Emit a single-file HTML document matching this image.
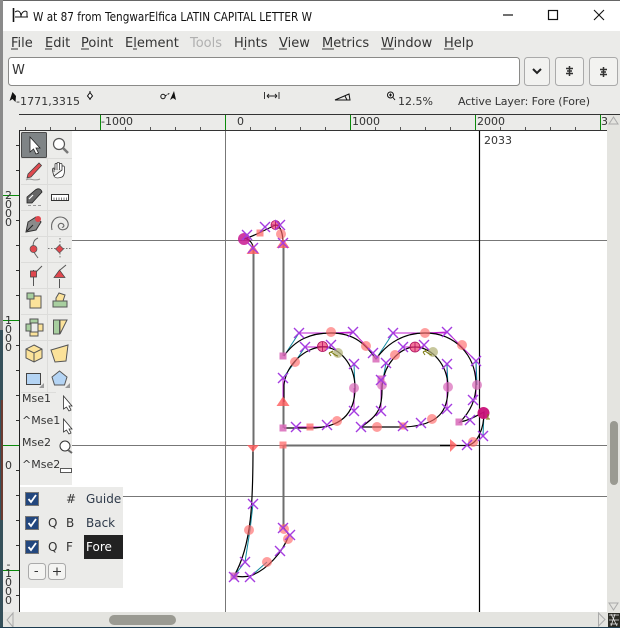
<!DOCTYPE html>
<html><head><meta charset="utf-8"><style>
html,body{margin:0;padding:0;width:620px;height:628px;overflow:hidden;background:#fff}
svg{display:block}
text{font-family:"DejaVu Sans","Liberation Sans",sans-serif;fill:#333}
</style></head><body>
<svg width="620" height="628" viewBox="0 0 620 628" xmlns="http://www.w3.org/2000/svg">
<defs>
<g id="x"><path d="M-5 -5L5 5M5 -5L-5 5" stroke="#a53be0" stroke-width="1.400" fill="none"/></g>
<circle id="c" r="5" fill="#ff6a6a" fill-opacity=".65"/>
<circle id="p" r="5" fill="#d868b8" fill-opacity=".7"/>
<circle id="o" r="5" fill="#b4b47c" fill-opacity=".75"/>
<rect id="s" x="-3.500" y="-3.500" width="7" height="7" fill="#ff6a6a" fill-opacity=".75"/>
<rect id="q" x="-3.500" y="-3.500" width="7" height="7" fill="#d868b8" fill-opacity=".85"/>
<path id="t" d="M0 -5.500L6.500 4H-6.500Z" fill="#ff5a5a" fill-opacity=".8"/>
</defs>

<rect width="620" height="628" fill="#fff"/>
<!-- title -->
<rect x="0" y="0" width="620" height="1" fill="#666"/>
<rect x="3" y="31" width="617" height="83" fill="#ebebe9"/>
<path d="M15 12C18 10 21 11 21 17M21 17C21 12 25 10 27 12V17M15 17H28" stroke="#111" fill="none" stroke-width="1"/>
<path d="M13.500 8V22" stroke="#111" stroke-width="1.600"/>
<text x="33" y="21" font-size="12" textLength="279" lengthAdjust="spacingAndGlyphs" style="fill:#111">W at 87 from TengwarElfica LATIN CAPITAL LETTER W</text>
<path d="M503 15H513" stroke="#111" stroke-width="1.200"/>
<rect x="548.500" y="10.500" width="9" height="9" fill="none" stroke="#111" stroke-width="1.200"/>
<path d="M594 10L604 20M604 10L594 20" stroke="#111" stroke-width="1.100"/>
<!-- menu -->
<g font-size="13">
<text x="11" y="47">File</text><path d="M11 49H18" stroke="#333"/>
<text x="45" y="47">Edit</text><path d="M45 49H52" stroke="#333"/>
<text x="81" y="47">Point</text><path d="M81 49H89" stroke="#333"/>
<text x="125" y="47">Element</text><path d="M133 49H137" stroke="#333"/>
<text x="190" y="47" style="fill:#b0b0b0">Tools</text>
<text x="234" y="47">Hints</text><path d="M243 49H246" stroke="#333"/>
<text x="279" y="47">View</text><path d="M279 49H287" stroke="#333"/>
<text x="322" y="47">Metrics</text><path d="M322 49H334" stroke="#333"/>
<text x="381" y="47">Window</text><path d="M381 49H394" stroke="#333"/>
<text x="444" y="47">Help</text><path d="M444 49H454" stroke="#333"/>
</g>
<!-- input -->
<rect x="8.500" y="57.500" width="511" height="28" rx="3" fill="#fff" stroke="#8a8a88"/>
<text x="12" y="74" font-size="13">W</text>
<g fill="#f2f2f0" stroke="#aaa">
<rect x="524.500" y="57.500" width="25" height="28" rx="3"/>
<rect x="555.500" y="57.500" width="28" height="28" rx="3"/>
<rect x="589.500" y="57.500" width="28" height="28" rx="3"/>
</g>
<path d="M533 69L537 73L541 69" stroke="#222" stroke-width="2" fill="none"/>
<path d="M569.500 66V76M566 68.500H573M567 71H572M566 73.500H573" stroke="#333" stroke-width="1.500" fill="none"/>
<path d="M603.500 67V77M600 69.500H607M601 72H606M600 74.500H607" stroke="#333" stroke-width="1.500" fill="none"/>
<!-- status -->
<path d="M12.500 92L9.500 101L12.500 99L15.500 102L16 96Z" fill="#111"/>
<text x="16" y="105" font-size="11" textLength="64">-1771,3315</text>
<path d="M90 91V100" stroke="#111"/><path d="M90 92.500L92.500 96L90 99L87.500 96Z" fill="#fff" stroke="#111"/>
<circle cx="163" cy="96.500" r="2.200" fill="none" stroke="#111"/><path d="M165 96L170 93" stroke="#111" stroke-dasharray="2 1"/>
<path d="M174 91L170 100L173 98L176 100Z" fill="#111"/>
<path d="M264.500 92V99M279 92V99M267 96H277M267 96L269 94M267 96L269 98M277 96L275 94M277 96L275 98" stroke="#222" fill="none" stroke-width=".9"/>
<path d="M335 100H350L349 94Z" fill="none" stroke="#111"/><path d="M345 96L347 100" stroke="#111"/>
<circle cx="390.500" cy="95" r="3" fill="none" stroke="#111"/><path d="M393 97.500L395 100M389 95H392M390.500 93.500V96.500" stroke="#111"/>
<text x="398" y="105" font-size="11">12.5%</text>
<text x="458" y="105" font-size="11" textLength="132">Active Layer: Fore (Fore)</text>

<!-- top ruler -->
<rect x="3" y="114" width="604" height="16" fill="#ebebe9"/>
<rect x="3" y="114" width="617" height="1" fill="#333"/>
<rect x="20" y="130" width="587" height="1" fill="#333"/>
<g stroke="#555">
<path d="M25.500 127V130M50.500 127V130M75.500 127V130M125.500 127V130M150.500 127V130M175.500 127V130M200.500 127V130M250.500 127V130M275.500 127V130M300.500 127V130M325.500 127V130M375.500 127V130M400.500 127V130M425.500 127V130M450.500 127V130M500.500 127V130M525.500 127V130M550.500 127V130M575.500 127V130"/>
</g>
<path d="M100.500 115V130M225.500 115V130M350.500 115V130M475.500 115V130M600.500 115V130" stroke="#0a8a0a"/>
<g font-size="11">
<text x="101" y="125">-1000</text><text x="237" y="125">0</text><text x="352" y="125">1000</text><text x="477" y="125">2000</text><text x="601" y="125">3</text>
</g>

<!-- left edge & ruler -->
<rect x="0" y="0" width="3" height="330" fill="#8a8a8a"/>
<rect x="0" y="330" width="3" height="298" fill="#35505a"/>
<rect x="1" y="400" width="2" height="120" fill="#6a3a30"/>
<rect x="3" y="114" width="16" height="498" fill="#ebebe9"/>
<rect x="19" y="130" width="1" height="482" fill="#222"/>
<path d="M16 145.500H19M16 170.500H19M16 220.500H19M16 245.500H19M16 270.500H19M16 295.500H19M16 345.500H19M16 370.500H19M16 395.500H19M16 420.500H19M16 470.500H19M16 495.500H19M16 520.500H19M16 545.500H19M16 595.500H19" stroke="#333"/>
<path d="M3 195.500H19M3 320.500H19M3 445.500H19M3 570.500H19" stroke="#0a8a0a"/>
<g font-size="11" text-anchor="middle">
<text x="8.500" y="199">2</text><text x="8.500" y="208">0</text><text x="8.500" y="217">0</text><text x="8.500" y="226">0</text>
<text x="8.500" y="324">1</text><text x="8.500" y="333">0</text><text x="8.500" y="342">0</text><text x="8.500" y="351">0</text>
<text x="8.500" y="469">0</text>
<text x="8.500" y="568">-</text><text x="8.500" y="577">1</text><text x="8.500" y="586">0</text><text x="8.500" y="595">0</text><text x="8.500" y="604">0</text>
</g>

<!-- guides -->
<path d="M225.500 131V612" stroke="#777"/>
<path d="M72 240.500H607M72 445.500H607M123 496.500H607" stroke="#777"/>
<path d="M479.500 131V612" stroke="#000" stroke-width="1.200"/>
<text x="484" y="144" font-size="11">2033</text>

<!-- glyph: gray stems -->
<g stroke="#6e6e6e" stroke-width="2" fill="none">
<path d="M253.500 248V447M283.500 243V356M283.500 402V428M283.500 445V528M283.500 445.500H452"/>
</g>
<!-- control lines -->
<g stroke="#c020d0" stroke-width="1" fill="none">
<path d="M283 378V402M299 333H353M305 347H331M354 388V411M381 380V411M393 333H447M403 347H424M447 364V409M476 361V400M361 427L381 411M299 333L320 333"/>
<path d="M331 333L353 332L373 353M425 333L447 332L476 361M296 427H327"/>
</g>
<g stroke="#108aa0" stroke-width="1" fill="none">
<path d="M284 356L299 333M283 378L295 362M305 347L295 362M376 359L393 333M354 364L355 388M386 363L382 385M447 364L448 387M476 361L477 385M484 413L483 436M253 504L250 530L245 562L234 576M250 577L267 562"/>
</g>
<!-- splines -->
<g stroke="#000" stroke-width="1.200" fill="none">
<path d="M244 239C255 236 268 228 276 225C281 226 283 235 283 243"/>
<path d="M244 238C249 239 253 243 253 248"/>
<path d="M253 447C253 500 252 545 234 576C240 577 245 577 250 576C267 570 283 552 289 535L284 528"/>
<path d="M440 445.500H467C478 444 484 428 484 412C476 416 470 420 460 422C470 412 476 400 476 385C476 355 455 333 425 333C405 333 388 342 376 359C366 345 355 333 331 333C310 333 295 340 284 356"/>
<path d="M284 428L310 428C345 428 355 410 355 388C355 365 340 347 323 347C305 347 286 365 284 385V402"/>
<path d="M361 427L405 427C440 425 448 410 448 388C448 365 432 347 415 347C400 347 382 365 382 390C382 405 380 415 361 427Z"/>
</g>
<!-- points -->
<use href="#c" x="281" y="234"/><use href="#s" x="260" y="233"/><use href="#t" x="283" y="244"/><use href="#t" x="253" y="250"/>
<use href="#c" x="331" y="332"/><use href="#c" x="366" y="346"/><use href="#c" x="295" y="362"/>
<use href="#p" x="354" y="388"/><use href="#c" x="337" y="421"/><use href="#s" x="310" y="427"/><use href="#q" x="283" y="428"/><use href="#q" x="283" y="356"/><use href="#t" x="283" y="402"/>
<use href="#o" x="338" y="353"/><use href="#o" x="433" y="352"/>
<use href="#c" x="425" y="333"/><use href="#c" x="462" y="345"/><use href="#c" x="395" y="355"/>
<use href="#p" x="448" y="387"/><use href="#p" x="477" y="385"/><use href="#p" x="382" y="385"/><use href="#q" x="381" y="379"/><use href="#q" x="376" y="359"/>
<use href="#c" x="432" y="419"/><use href="#c" x="377" y="427"/><use href="#s" x="403" y="426"/><use href="#q" x="459" y="422"/><use href="#c" x="473" y="442"/>
<path d="M450 439L457 445L450 452Z" fill="#ff5a5a" fill-opacity=".8"/>
<path d="M247 445H259L253 452Z" fill="#ff5a5a" fill-opacity=".8"/>
<use href="#s" x="283" y="445"/><use href="#c" x="249" y="530"/><use href="#q" x="234" y="576"/><use href="#c" x="267" y="562"/><use href="#c" x="288" y="539"/><use href="#c" x="284" y="529"/>
<!-- start/special points -->
<circle cx="244" cy="239" r="6" fill="#c81890" fill-opacity=".85"/>
<circle cx="483.500" cy="413" r="6" fill="#c81078" fill-opacity=".95"/>
<g fill="#f04878" fill-opacity=".75" stroke="#b01060" stroke-width=".8"><circle cx="275.500" cy="225" r="4.500"/><circle cx="322.500" cy="346.500" r="5"/><circle cx="415" cy="347" r="5"/></g>
<path d="M271 225H280M275.500 220.500V229.500M317.500 346.500H327.500M322.500 341.500V351.500M410 347H420M415 342V352" stroke="#b01060" stroke-width=".8"/>
<path d="M329 353L333 351M329 353L331 356M331 352C334 354 336 356 338 356M423 352L427 350M423 352L425 355M425 351C428 353 430 355 432 355M488 414V419M486 419H490" stroke="#7a7a10" fill="none"/>
<!-- X points -->
<g>
<use href="#x" x="247" y="235"/><use href="#x" x="265" y="227"/><use href="#x" x="280" y="225"/><use href="#x" x="283" y="243"/><use href="#x" x="253" y="248"/>
<use href="#x" x="299" y="333"/><use href="#x" x="353" y="332"/><use href="#x" x="305" y="347"/><use href="#x" x="331" y="345"/><use href="#x" x="354" y="364"/><use href="#x" x="283" y="378"/><use href="#x" x="354" y="411"/><use href="#x" x="327" y="425"/><use href="#x" x="296" y="427"/><use href="#x" x="361" y="427"/>
<use href="#x" x="373" y="353"/><use href="#x" x="393" y="333"/><use href="#x" x="447" y="332"/><use href="#x" x="403" y="347"/><use href="#x" x="424" y="345"/><use href="#x" x="386" y="363"/><use href="#x" x="447" y="364"/><use href="#x" x="476" y="361"/><use href="#x" x="381" y="380"/><use href="#x" x="381" y="411"/><use href="#x" x="447" y="409"/><use href="#x" x="403" y="426"/><use href="#x" x="421" y="423"/><use href="#x" x="473" y="400"/><use href="#x" x="470" y="420"/><use href="#x" x="483" y="436"/><use href="#x" x="467" y="445"/>
<use href="#x" x="253" y="504"/><use href="#x" x="245" y="562"/><use href="#x" x="234" y="577"/><use href="#x" x="250" y="577"/><use href="#x" x="280" y="551"/><use href="#x" x="290" y="535"/><use href="#x" x="283" y="528"/>
</g>

<!-- toolbox -->
<rect x="20" y="131" width="52" height="354" fill="#ececea"/>
<path d="M21 184.500H72M21 210.500H72M21 236.500H72M21 262.500H72M21 288.500H72M21 314.500H72M21 340.500H72M21 392.500H56M47.500 158V392M47 158.500H72" stroke="#dcdcda"/>
<rect x="21.500" y="132.500" width="25" height="25" rx="1" fill="#7f8486" stroke="#4a4a4a"/>
<path d="M21 158.500H47" stroke="#dcdcda"/>
<path d="M30 137V152L33.500 149L36 154L38.500 153L36 148H40Z" fill="#fff" stroke="#222" stroke-width=".8"/>
<circle cx="59" cy="144" r="5.500" fill="#fff" stroke="#555" stroke-width="1.200"/><path d="M63 148L68 153" stroke="#777" stroke-width="2.500"/>
<path d="M28 174L39 163L41.500 165.500L31 177L27 178Z" fill="#e04a50" stroke="#444" stroke-width=".8"/><path d="M26 180C30 177 34 182 40 179" stroke="#999" fill="none"/>
<path d="M54 176C52 170 52 168 54 168V172M55 170V164.500C55 163 57 163 57 164.500V170M57 168V163.500C57 162 59.500 162 59.500 163.500V170M59.500 168V164.500C59.500 163 62 163 62 164.500V170M62 170V167C62 165.500 64 165.500 64.500 167C65 172 64 176 62 177C58 178.500 55 178 54 176Z" fill="#fff" stroke="#333" stroke-width=".8"/>
<path d="M27 203V197L36 189.500C39 188 41 189 42 192L32 203Z" fill="#666" stroke="#222" stroke-width=".8"/><path d="M29 199L33 195" stroke="#fff" stroke-width="1.200"/><path d="M28 205.500H41" stroke="#999" stroke-dasharray="3 2"/>
<rect x="51.500" y="194.500" width="17" height="6" fill="#fff" stroke="#333"/><path d="M54 197.500V200M56.500 197.500V200M59 197.500V200M61.500 197.500V200M64 197.500V200M66.500 197.500V200" stroke="#444" stroke-width=".7"/>
<path d="M26 232L28 222L36 217L41 222L36 230Z" fill="#8a8a8a" stroke="#333"/><path d="M27 231L33 225" stroke="#222"/>
<circle cx="38" cy="219" r="3" fill="#e0484e"/>
<path d="M52 230C50 222 55 217 60 217C66 217 69 222 68 226C67 230 61 231 59 228C57 225 60 222 63 224C65 226 63 228 62 227" stroke="#666" stroke-width="1.100" fill="none"/>
<path d="M38 238C33 240 33 244 33 249C33 252 36 255 38 258" stroke="#666" fill="none"/><circle cx="33.500" cy="249" r="3.500" fill="#e0484e" stroke="#555" stroke-width=".7"/>
<path d="M48 248.500H71M60 238V259" stroke="#777" stroke-dasharray="1.500 1.500"/><path d="M59.500 245L63.500 249L59.500 253L55.500 249Z" fill="#e0484e" stroke="#555" stroke-width=".7"/>
<path d="M33.500 270V286M36 272L42 266" stroke="#555"/><rect x="30.500" y="271" width="6" height="6" fill="#e0484e" stroke="#444" stroke-width=".8"/>
<path d="M59.500 279V288M60 270L66 265" stroke="#555"/><path d="M59.500 270L65 277.500H54Z" fill="#e0484e" stroke="#444" stroke-width=".7"/>
<rect x="30" y="296" width="11" height="12" fill="#fbe29a" stroke="#555"/><rect x="27" y="293" width="7" height="6" fill="#a8cfa0" stroke="#555"/>
<path d="M56 298L59 293L65 295L62 304H56Z" fill="#fbe29a" stroke="#555"/><rect x="53" y="301" width="14" height="6" fill="#a8cfa0" stroke="#555"/>
<g stroke="#555"><rect x="26" y="324" width="5" height="7" fill="#a8cfa0"/><rect x="38" y="324" width="5" height="7" fill="#fbe29a"/><rect x="30" y="319" width="8" height="4" fill="#a8cfa0"/><rect x="30" y="332" width="8" height="4" fill="#fbe29a"/></g>
<rect x="53.500" y="320" width="6" height="14" fill="#a8cfa0" stroke="#555"/><path d="M60 320H67L60 334Z" fill="#fbe29a" stroke="#555"/>
<path d="M34 345L42 349V358L34 362L26 358V349Z" fill="#fbe29a" stroke="#555"/><path d="M26 349L34 353L42 349M34 353V362" stroke="#555" fill="none"/>
<path d="M51 350L68 345L66 361L55 362Z" fill="#fbe29a" stroke="#555"/>
<rect x="26.500" y="373.500" width="14" height="11" fill="#b4d4f4" stroke="#444"/><path d="M44 383V388H39Z" fill="#999"/>
<path d="M59.500 371L67 377L64.500 385H54.500L52 377Z" fill="#b4d4f4" stroke="#555"/><path d="M70 383V388H65Z" fill="#999"/>
<g font-size="11"><text x="22" y="402">Mse1</text><text x="22" y="424">^Mse1</text><text x="22" y="446">Mse2</text><text x="22" y="468">^Mse2</text></g>
<path d="M63.500 396V409L66.500 407L69 411L71 410L69 406H72Z" fill="#fff" stroke="#333" stroke-width=".8"/>
<path d="M63.500 419V432L66.500 430L69 434L71 433L69 429H72Z" fill="#fff" stroke="#333" stroke-width=".8"/>
<circle cx="65" cy="446" r="5" fill="#fff" stroke="#333"/><path d="M68 450L72 453" stroke="#666" stroke-width="2"/>
<rect x="60.500" y="468.500" width="11" height="4" fill="#fff" stroke="#333" stroke-width=".8"/>

<!-- layers -->
<rect x="20" y="487" width="103" height="101" fill="#ebebe9"/>
<rect x="84" y="535" width="39" height="24" fill="#222"/>
<g fill="#23477e" stroke="#777"><rect x="25.500" y="492.500" width="13" height="13"/><rect x="25.500" y="516.500" width="13" height="13"/><rect x="25.500" y="540.500" width="13" height="13"/></g>
<path d="M28.500 499L31 502L36 495M28.500 523L31 526L36 519M28.500 547L31 550L36 543" stroke="#fff" stroke-width="1.800" fill="none"/>
<g font-size="12">
<text x="66" y="503">#</text><text x="86" y="503" style="fill:#2e3a4a">Guide</text>
<text x="48" y="527">Q</text><text x="66" y="527">B</text><text x="86" y="527" style="fill:#2e3a4a">Back</text>
<text x="48" y="551">Q</text><text x="66" y="551">F</text><text x="86" y="551" style="fill:#fff">Fore</text>
</g>
<g fill="#f4f4f2" stroke="#aaa"><rect x="28.500" y="563.500" width="17" height="16" rx="3"/><rect x="48.500" y="563.500" width="17" height="16" rx="3"/></g>
<path d="M34.500 571.500H38M53 571.500H61M57 567.500V575.500" stroke="#333" stroke-width="1.100"/>

<!-- scrollbars -->
<rect x="607" y="115" width="13" height="497" fill="#e4e4e0"/>
<rect x="0" y="612" width="620" height="16" fill="#e4e4e0"/>
<path d="M609 124L613.500 117L618 124Z" fill="#e4e4e0" stroke="#aaa"/>
<path d="M609 603L613.500 610L618 603Z" fill="#e4e4e0" stroke="#aaa"/>
<rect x="610" y="421" width="8" height="64" rx="4" fill="#9a9a92"/>
<rect x="109" y="615" width="67" height="10" rx="5" fill="#9a9a92"/>
<path d="M13 613V627L7 620Z" fill="#e4e4e0" stroke="#aaa"/>
<path d="M598.500 613V626L605 619.500Z" fill="#e4e4e0" stroke="#aaa"/>
<rect x="608" y="613" width="12" height="14" fill="#2a2a24"/>
<path d="M609 615L619 615M611 614L617 626M615 614L611 626M609 620H619M610 624H618" stroke="#e8e8e8" stroke-width=".8"/>
<rect x="0" y="612" width="3" height="16" fill="#35505a"/>
<rect x="0" y="627" width="620" height="1" fill="#1c3c50"/>
</svg>
</body></html>
